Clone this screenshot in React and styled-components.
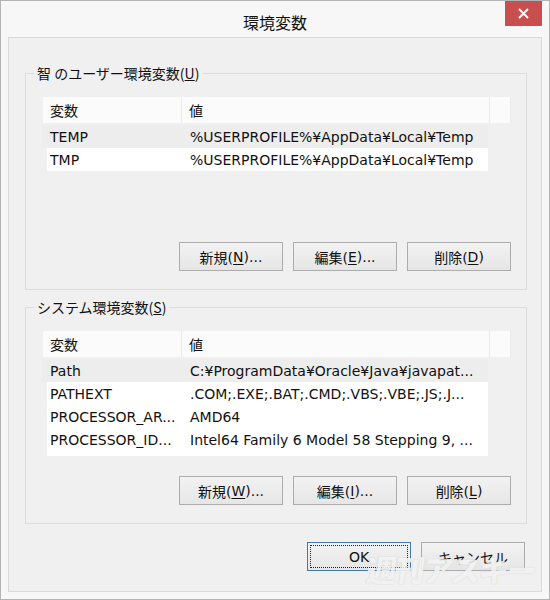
import React from "react";
import styled, { createGlobalStyle } from "styled-components";

const Global = createGlobalStyle`
  html, body { margin: 0; padding: 0; background: #f6f6f6; }
  body { font-family: "DejaVu Sans", "Noto Sans CJK JP", sans-serif; }
  * { box-sizing: border-box; }
`;

const Window = styled.div`
  position: relative;
  width: 550px;
  height: 600px;
  border: 1px solid #b4b4b4;
  background: #f7f7f7;
  display: flex;
  flex-direction: column;
  overflow: hidden;
`;

const TitleBar = styled.div`
  position: relative;
  height: 36px;
  flex: none;
  display: flex;
  align-items: center;
  justify-content: center;
`;

const Title = styled.div`
  font-family: "Noto Sans CJK JP", sans-serif;
  font-size: 16px;
  color: #111;
  padding-top: 6px;
`;

const CloseButton = styled.div`
  position: absolute;
  top: 0;
  right: 7px;
  width: 37px;
  height: 25px;
  background: #c74f4f;
  display: flex;
  align-items: center;
  justify-content: center;
`;

const Client = styled.div`
  flex: 1;
  margin: 0 7px 7px 7px;
  border: 1px solid #d9d9d9;
  background: #f0f0f0;
  display: flex;
  flex-direction: column;
  padding: 35px 14px 0 16px;
`;

const Group = styled.fieldset`
  position: relative;
  margin: 0 0 17px 0;
  border: 1px solid #dcdcdc;
  border-radius: 0;
  padding: 23px 15px 18px 16px;
  height: 217px;
  min-width: 0;
`;

const Legend = styled.div`
  position: absolute;
  top: -11px;
  left: 8px;
  padding: 0 3px;
  background: #f0f0f0;
  font-family: "Noto Sans CJK JP", sans-serif;
  font-size: 14px;
  line-height: 20px;
  color: #111;
`;

const ListBox = styled.div`
  height: 135px;
  display: flex;
  flex-direction: column;
`;

const Header = styled.div`
  display: grid;
  grid-template-columns: 138px 307px 20px;
  column-gap: 1px;
  height: 26px;
  margin-left: 1px;
  background: #eaeaea;
`;

const HeaderCell = styled.div`
  background: #fbfbfb;
  font-family: "Noto Sans CJK JP", sans-serif;
  font-size: 14px;
  color: #111;
  display: flex;
  align-items: center;
  padding-left: 7px;
`;

const Rows = styled.div`
  padding-top: 2px;
  display: flex;
  flex-direction: column;
`;

const WhiteBlock = styled.div`
  margin-left: 5px;
  width: 441px;
  background: #ffffff;
  padding-bottom: ${(p) => p.$pad || 0}px;
`;

const Row = styled.div`
  display: grid;
  grid-template-columns: ${(p) => (p.$inset ? "135px" : "140px")} 1fr;
  height: 23px;
  align-items: center;
  width: ${(p) => (p.$inset ? "441px" : "446px")};
  background: ${(p) => (p.$first ? "#ededed" : "transparent")};
  font-size: 14px;
  color: #111;
  white-space: nowrap;
  overflow: hidden;
`;

const Cell = styled.div`
  padding-left: ${(p) => (p.$name && p.$inset ? "3px" : "8px")};
  overflow: hidden;
`;

const ButtonRow = styled.div`
  margin-top: 10px;
  display: flex;
  justify-content: flex-end;
  gap: 10px;
`;

const Button = styled.div`
  position: relative;
  width: 104px;
  height: 29px;
  border: 1px solid ${(p) => (p.$default ? "#3d7bad" : "#acacac")};
  background: linear-gradient(#f2f2f2, #e6e6e6);
  display: flex;
  align-items: center;
  justify-content: center;
  font-family: "DejaVu Sans", "Noto Sans CJK JP", sans-serif;
  font-size: 14px;
  color: #111;
  u { text-underline-offset: 2px; }
`;

const FocusRect = styled.div`
  position: absolute;
  inset: 2px;
  border: 1px dotted #222;
`;

const Footer = styled.div`
  margin-top: 1px;
  display: flex;
  justify-content: flex-end;
  gap: 10px;
  padding-right: 2px;
`;

const Watermark = styled.div`
  position: absolute;
  right: 14px;
  bottom: 8px;
  font-family: "Noto Sans CJK JP", sans-serif;
  font-weight: 900;
  font-size: 30px;
  letter-spacing: -2px;
  color: rgba(255, 255, 255, 0.8);
  text-shadow: 0 0 1px rgba(140, 140, 140, 0.45);
  transform: skewX(-8deg);
  pointer-events: none;
`;

function List({ rows, whitePad }) {
  const [first, ...rest] = rows;
  return (
    <ListBox>
      <Header>
        <HeaderCell>変数</HeaderCell>
        <HeaderCell>値</HeaderCell>
        <HeaderCell />
      </Header>
      <Rows>
        <Row $first>
          <Cell $name>{first[0]}</Cell>
          <Cell>{first[1]}</Cell>
        </Row>
        <WhiteBlock $pad={whitePad}>
          {rest.map((r) => (
            <Row key={r[0]} $inset>
              <Cell $name $inset>{r[0]}</Cell>
              <Cell $inset>{r[1]}</Cell>
            </Row>
          ))}
        </WhiteBlock>
      </Rows>
    </ListBox>
  );
}

export default function App() {
  return (
    <>
      <Global />
      <Window>
        <TitleBar>
          <Title>環境変数</Title>
          <CloseButton>
            <svg width="11" height="11" viewBox="0 0 11 11">
              <path d="M1 1 L10 10 M10 1 L1 10" stroke="#fff" strokeWidth="2" />
            </svg>
          </CloseButton>
        </TitleBar>
        <Client>
          <Group>
            <Legend>
              智 のユーザー環境変数(<u>U</u>)
            </Legend>
            <List
              whitePad={0}
              rows={[
                ["TEMP", "%USERPROFILE%¥AppData¥Local¥Temp"],
                ["TMP", "%USERPROFILE%¥AppData¥Local¥Temp"],
              ]}
            />
            <ButtonRow>
              <Button>新規(<u>N</u>)...</Button>
              <Button>編集(<u>E</u>)...</Button>
              <Button>削除(<u>D</u>)</Button>
            </ButtonRow>
          </Group>
          <Group>
            <Legend>
              システム環境変数(<u>S</u>)
            </Legend>
            <List
              whitePad={5}
              rows={[
                ["Path", "C:¥ProgramData¥Oracle¥Java¥javapat..."],
                ["PATHEXT", ".COM;.EXE;.BAT;.CMD;.VBS;.VBE;.JS;.J..."],
                ["PROCESSOR_AR...", "AMD64"],
                ["PROCESSOR_ID...", "Intel64 Family 6 Model 58 Stepping 9, ..."],
              ]}
            />
            <ButtonRow>
              <Button>新規(<u>W</u>)...</Button>
              <Button>編集(<u>I</u>)...</Button>
              <Button>削除(<u>L</u>)</Button>
            </ButtonRow>
          </Group>
          <Footer>
            <Button $default>
              <FocusRect />
              OK
            </Button>
            <Button>キャンセル</Button>
          </Footer>
        </Client>
        <Watermark>週刊アスキー</Watermark>
      </Window>
    </>
  );
}
